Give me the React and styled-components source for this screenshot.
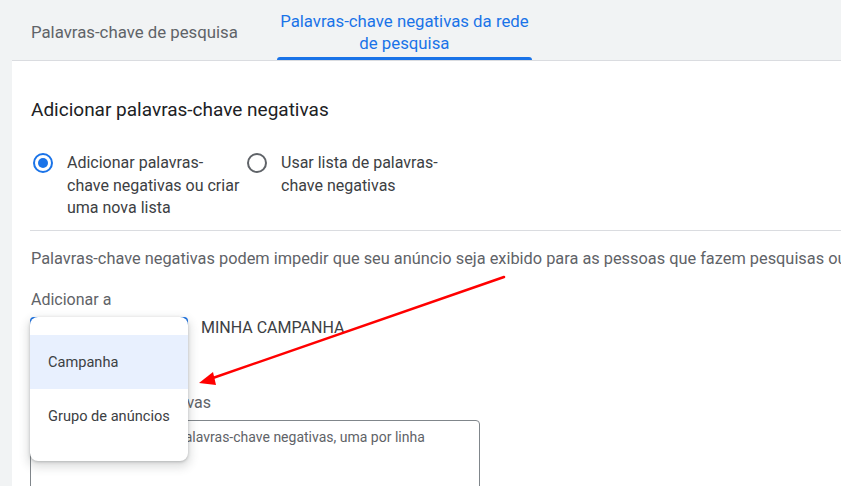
import React from 'react'
import styled, { createGlobalStyle } from 'styled-components'

const Global = createGlobalStyle`
  html, body {
    margin: 0;
    padding: 0;
    background: #f1f3f4;
  }
  body {
    font-family: Roboto, "Noto Sans", Arial, sans-serif;
    overflow: hidden;
  }
`

const Page = styled.div`
  position: relative;
  width: 841px;
  height: 486px;
  overflow: hidden;
  background: #f1f3f4;
`

const TabBar = styled.div`
  display: flex;
  height: 60px;
  padding-left: 12px;
  gap: 20px;
`

const Tab = styled.div`
  position: relative;
  display: flex;
  align-items: center;
  justify-content: center;
  box-sizing: border-box;
  width: ${p => (p.$width ? `${p.$width}px` : 'auto')};
  padding: 10px ${p => (p.$width ? 0 : 19)}px 6px;
  font-size: 16.8px;
  line-height: 22px;
  text-align: center;
  white-space: nowrap;
  color: ${p => (p.$active ? '#1a73e8' : '#5f6368')};

  &::after {
    content: '';
    display: ${p => (p.$active ? 'block' : 'none')};
    position: absolute;
    left: 0;
    right: 0;
    bottom: 0;
    height: 3px;
    border-radius: 3px 3px 0 0;
    background: #1a73e8;
  }
`

const Panel = styled.div`
  margin-left: 12px;
  min-height: 426px;
  background: #fff;
  border-top: 1px solid #dadce0;
  padding: 37px 0 0 19px;
`

const Heading = styled.h2`
  margin: 0;
  font-size: 19px;
  font-weight: 400;
  line-height: 24px;
  color: #202124;
`

const RadioGroup = styled.div`
  display: flex;
  margin-top: 30px;
  padding-left: 2px;
`

const RadioOption = styled.label`
  display: flex;
  align-items: flex-start;
  gap: 14px;
  width: ${p => p.$width}px;
  font-size: 16px;
  line-height: 22.5px;
  color: #3c4043;
`

const RadioCircle = styled.span`
  flex: none;
  display: flex;
  align-items: center;
  justify-content: center;
  box-sizing: border-box;
  width: 20px;
  height: 20px;
  margin-top: 1px;
  border-radius: 50%;
  border: 2px solid ${p => (p.$checked ? '#1a73e8' : '#5f6368')};

  &::after {
    content: '';
    display: ${p => (p.$checked ? 'block' : 'none')};
    width: 10px;
    height: 10px;
    border-radius: 50%;
    background: #1a73e8;
  }
`

const OptionText = styled.span`
  white-space: nowrap;
`

const Divider = styled.hr`
  margin: 10px 0 0 -1px;
  border: none;
  border-top: 1px solid #dadce0;
`

const Hint = styled.p`
  margin: 18px 0 0;
  font-size: 16.35px;
  line-height: 20px;
  white-space: nowrap;
  color: #5f6368;
`

const FieldLabel = styled.div`
  margin-top: ${p => p.$top}px;
  font-size: 16px;
  line-height: 20px;
  color: #5f6368;
`

const SelectRow = styled.div`
  display: flex;
  align-items: flex-start;
  gap: 13px;
  margin-top: 7px;
  margin-left: -1px;
`

const SelectAnchor = styled.div`
  position: relative;
  width: 158px;
  height: 56px;
`

const SelectBox = styled.div`
  box-sizing: border-box;
  width: 100%;
  height: 100%;
  border: 2px solid #1a73e8;
  border-radius: 4px;
`

const Menu = styled.ul`
  position: absolute;
  top: 0;
  left: 0;
  z-index: 2;
  width: 158px;
  margin: 0;
  padding: 18px 0;
  list-style: none;
  background: #fff;
  border-radius: 8px;
  box-shadow: 0 1px 3px rgba(60, 64, 67, 0.3), 0 4px 8px 3px rgba(60, 64, 67, 0.15);
`

const MenuItem = styled.li`
  display: flex;
  align-items: center;
  height: 54px;
  padding-left: 18px;
  font-size: 14.6px;
  color: #3c4043;
  background: ${p => (p.$selected ? '#e8f0fe' : 'transparent')};
`

const CampaignName = styled.div`
  font-size: 16px;
  line-height: 22px;
  color: #3c4043;
`

const KeywordBox = styled.textarea`
  display: block;
  box-sizing: border-box;
  width: 450px;
  height: 110px;
  margin: 7px 0 0 -1px;
  padding: 7px 16px 7px 21px;
  border: 1px solid #80868b;
  border-radius: 4px;
  resize: none;
  font-family: Roboto, Arial, sans-serif;
  font-size: 14px;
  line-height: 18px;
  color: #3c4043;
  background: #fff;

  &::placeholder {
    color: #5f6368;
  }
`

const Arrow = styled.svg`
  position: absolute;
  left: 0;
  top: 0;
  z-index: 3;
  pointer-events: none;
`

export default function App() {
  return (
    <Page>
      <Global />
      <TabBar>
        <Tab>Palavras-chave de pesquisa</Tab>
        <Tab $active $width={255}>
          Palavras-chave negativas da rede
          <br />
          de pesquisa
        </Tab>
      </TabBar>

      <Panel>
        <Heading>Adicionar palavras-chave negativas</Heading>

        <RadioGroup>
          <RadioOption $width={214}>
            <RadioCircle $checked />
            <OptionText>
              Adicionar palavras-
              <br />
              chave negativas ou criar
              <br />
              uma nova lista
            </OptionText>
          </RadioOption>
          <RadioOption $width={214}>
            <RadioCircle />
            <OptionText>
              Usar lista de palavras-
              <br />
              chave negativas
            </OptionText>
          </RadioOption>
        </RadioGroup>

        <Divider />

        <Hint>
          Palavras-chave negativas podem impedir que seu anúncio seja exibido para as pessoas que fazem pesquisas ou
          acessam sites com esses termos.
        </Hint>

        <FieldLabel $top={21}>Adicionar a</FieldLabel>
        <SelectRow>
          <SelectAnchor>
            <SelectBox />
            <Menu>
              <MenuItem $selected>Campanha</MenuItem>
              <MenuItem>Grupo de anúncios</MenuItem>
            </Menu>
          </SelectAnchor>
          <CampaignName>MINHA CAMPANHA</CampaignName>
        </SelectRow>

        <FieldLabel $top={20}>Palavras-chave negativas</FieldLabel>
        <KeywordBox placeholder="Adicione ou cole as palavras-chave negativas, uma por linha" />
      </Panel>

      <Arrow width="841" height="486" viewBox="0 0 841 486">
        <line x1="504" y1="277" x2="210" y2="379" stroke="#ff0000" strokeWidth="2.5" strokeLinecap="round" />
        <polygon points="199,383 213,372 216,385" fill="#ff0000" />
      </Arrow>
    </Page>
  )
}
